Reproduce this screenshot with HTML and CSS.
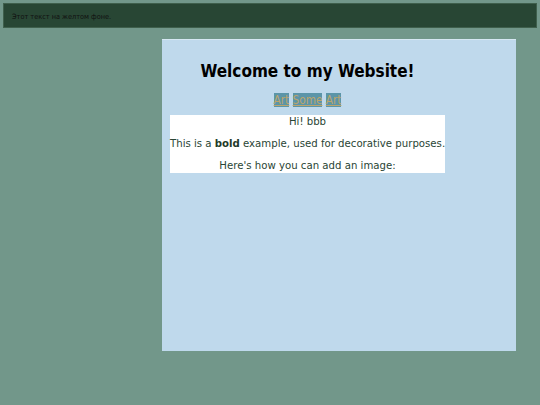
FILE: index.html
```html
<!DOCTYPE html>
<html>
<head>
<meta charset="utf-8">
<link rel="stylesheet" href="styles.css">
</head>
<body>
<div class="topbar">Этот текст на желтом фоне.</div>
<div class="main">
  <div class="inner">
    <h1 class="title">Welcome to my Website!</h1>
    <nav class="links"><a href="#">Art</a> <a href="#">Some</a> <a href="#">Art</a></nav>
    <div class="card">
      <p>Hi! bbb</p>
      <p>This is a <b>bold</b> example, used for decorative purposes.</p>
      <p>Here's how you can add an image:</p>
    </div>
  </div>
</div>
</body>
</html>
```
FILE: styles.css
```css
html, body {
  margin: 0;
  padding: 0;
}
body {
  background: #72978a;
  font-family: "DejaVu Sans Condensed", "DejaVu Sans", sans-serif;
  font-stretch: condensed;
  color: #2a4535;
  padding: 3px 3px 0 3px;
}
.topbar {
  background: #284634;
  border: 1px solid #3f5f4c;
  height: 23px;
  line-height: 25px;
  padding-left: 8px;
  font-size: 7.3px;
  color: #111;
}
.main {
  margin-left: 159px;
  margin-top: 11px;
  width: 354px;
  height: 312px;
  background: #bfd9ec;
  border-top: 1px solid #d6e7f2;
  box-sizing: border-box;
}
.inner {
  width: 275px;
  margin-left: 8px;
  text-align: center;
}
.title {
  margin: 0;
  padding-top: 21px;
  font-size: 17px;
  line-height: 20px;
  color: #000;
  font-weight: bold;
}
.links {
  margin-top: 12px;
  font-size: 11.7px;
  line-height: 14px;
}
.links a {
  background: #5c95a8;
  color: #bba56c;
  text-decoration: underline;
}
.card {
  background: #fff;
  margin-top: 8px;
  font-size: 11.3px;
  line-height: 14px;
}
.card p {
  margin: 8px 0;
  white-space: nowrap;
}
.card p:first-child { margin-top: 0; }
.card p:last-child { margin-bottom: 0; }
.card b { color: #1f3a2a; }
```
